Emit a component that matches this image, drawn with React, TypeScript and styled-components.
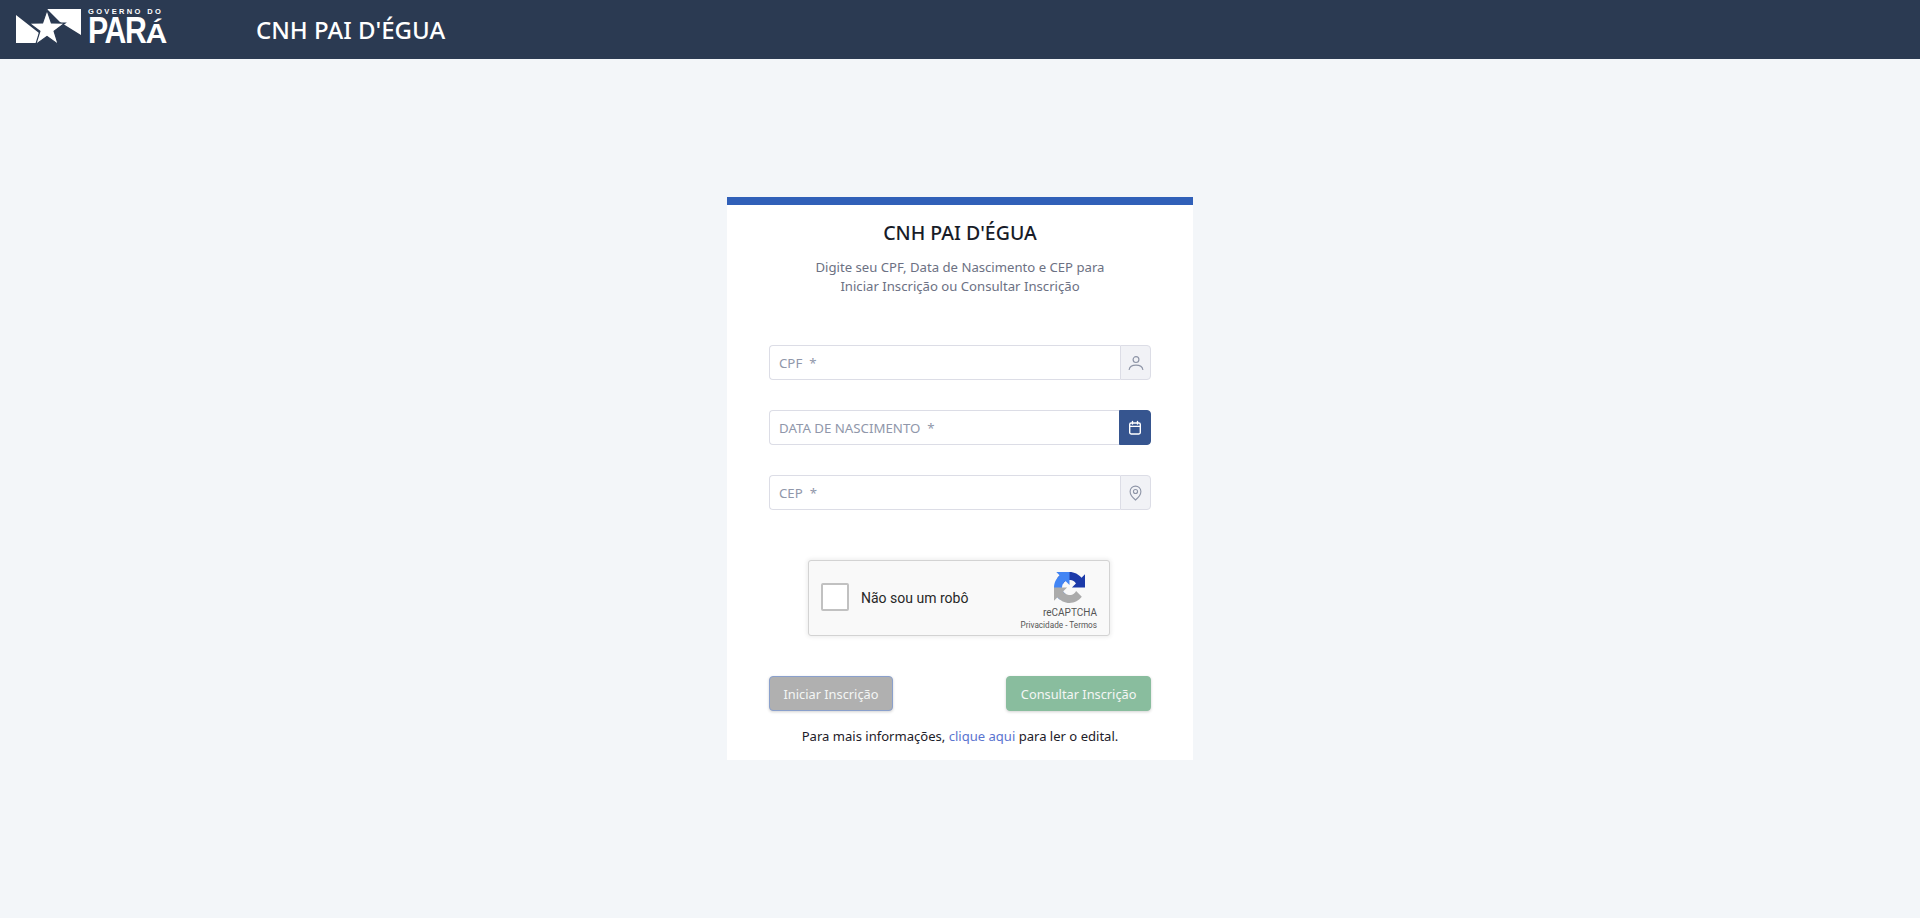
import { ReactNode } from "react";
import styled, { createGlobalStyle } from "styled-components";

const GlobalStyle = createGlobalStyle`
  html, body {
    margin: 0;
    padding: 0;
    height: 100%;
    background: #f3f6f9;
    font-family: "Noto Sans", "Open Sans", sans-serif;
  }
  * { box-sizing: border-box; }
`;

const Page = styled.div`
  min-height: 918px;
  display: flex;
  flex-direction: column;
`;

const Header = styled.header`
  height: 59px;
  background: #2b3a52;
  display: flex;
  align-items: center;
  padding-left: 16px;
`;

const LogoBox = styled.div`
  width: 240px;
  height: 59px;
  display: flex;
  align-items: flex-start;
  flex-shrink: 0;
`;

const LogoMark = styled.svg`
  width: 66px;
  height: 36px;
  margin-top: 9px;
  flex-shrink: 0;
`;

const LogoWords = styled.div`
  margin: 7px 0 0 6px;
  display: flex;
  flex-direction: column;
  color: #ffffff;
  font-family: "Liberation Sans", Arial, sans-serif;
`;

const LogoSmall = styled.span`
  font-size: 7.5px;
  line-height: 9px;
  font-weight: 700;
  letter-spacing: 2.35px;
  white-space: nowrap;
`;

const LogoBig = styled.span`
  font-size: 36px;
  line-height: 29px;
  font-weight: 700;
  letter-spacing: -1.6px;
  white-space: nowrap;
  transform: scaleX(0.84);
  transform-origin: left;
`;

const LogoAccented = styled.span`
  display: inline-block;
  transform: scaleY(0.79);
  transform-origin: 0 26.4px;
`;

const HeaderTitle = styled.h1`
  margin: 0;
  color: #ffffff;
  font-size: 24px;
  font-weight: 500;
  white-space: nowrap;
`;

const Main = styled.main`
  display: flex;
  justify-content: center;
  padding-top: 138px;
`;

const Card = styled.section`
  width: 466px;
  height: 563px;
  background: #ffffff;
  border-top: 8px solid #3060b8;
  padding: 0 42px;
  display: flex;
  flex-direction: column;
`;

const CardTitle = styled.h2`
  margin: 15px 0 0;
  font-size: 19.5px;
  line-height: 26px;
  font-weight: 500;
  color: #181c28;
  text-align: center;
`;

const Subtitle = styled.p`
  margin: 12px 0 0;
  font-size: 13.15px;
  line-height: 19px;
  color: #6c7183;
  text-align: center;
`;

const Fields = styled.div`
  margin-top: 49px;
  display: flex;
  flex-direction: column;
  gap: 30px;
`;

const FieldRow = styled.div`
  position: relative;
  display: flex;
  height: 35px;
`;

const FieldInput = styled.input`
  flex: 1;
  min-width: 0;
  height: 100%;
  border: 1px solid #dcdde6;
  border-right: none;
  border-radius: 4px 0 0 4px;
  background: #ffffff;
  outline: none;
`;

const FieldLabel = styled.label`
  position: absolute;
  left: 10px;
  top: 0;
  line-height: 36px;
  font-size: 13.25px;
  color: #9097aa;
  white-space: pre;
`;

const Addon = styled.span<{ $active?: boolean }>`
  width: ${(p) => (p.$active ? "32px" : "31px")};
  display: flex;
  align-items: center;
  justify-content: center;
  border-radius: 0 4px 4px 0;
  border: 1px solid ${(p) => (p.$active ? "#36558f" : "#dcdde6")};
  background: ${(p) => (p.$active ? "#36558f" : "#f1f2f6")};
  color: ${(p) => (p.$active ? "#ffffff" : "#8e95a7")};
`;

const Captcha = styled.div`
  align-self: center;
  margin: 50px 0 0 -2px;
  width: 302px;
  height: 76px;
  background: #f9f9f9;
  border: 1px solid #d3d3d3;
  border-radius: 3px;
  box-shadow: 0 0 4px 1px rgba(0, 0, 0, 0.08);
  display: flex;
  align-items: center;
  padding: 0 12px;
  font-family: Roboto, "Liberation Sans", sans-serif;
`;

const CaptchaBox = styled.span`
  width: 28px;
  height: 28px;
  margin-top: -2px;
  background: #ffffff;
  border: 2px solid #c1c1c1;
  border-radius: 2px;
  flex-shrink: 0;
`;

const CaptchaLabel = styled.span`
  margin-left: 12px;
  font-size: 14px;
  color: #282828;
  white-space: nowrap;
`;

const CaptchaBrand = styled.div`
  margin-left: auto;
  align-self: flex-start;
  padding-top: 11px;
  display: flex;
  flex-direction: column;
  align-items: flex-end;
  color: #555555;
`;

const CaptchaMark = styled.div`
  display: flex;
  flex-direction: column;
  align-items: center;
`;

const CaptchaLogo = styled.svg`
  width: 31px;
  height: 31px;
`;

const CaptchaName = styled.span`
  margin-top: 3px;
  font-size: 10px;
  line-height: 13px;
`;

const CaptchaLinks = styled.span`
  margin-top: 1px;
  font-size: 8.2px;
  line-height: 11px;
  white-space: nowrap;
`;

const Actions = styled.div`
  margin-top: 40px;
  display: flex;
  justify-content: space-between;
`;

const ActionButton = styled.button<{ $tone: "grey" | "green" }>`
  height: 35px;
  padding: 0 13.5px;
  border-radius: 4px;
  font-family: inherit;
  font-size: 12.8px;
  color: #f4f6f5;
  white-space: nowrap;
  background: ${(p) => (p.$tone === "grey" ? "#b0b0b0" : "#89bd9e")};
  border: 1px solid ${(p) => (p.$tone === "grey" ? "#8aa0cc" : "#89bd9e")};
  box-shadow: 0 1px 3px rgba(0, 0, 0, 0.18);
`;

const MoreInfo = styled.p`
  margin: 16px 0 0;
  font-size: 13.05px;
  line-height: 18px;
  color: #1d2029;
  text-align: center;
`;

const InfoLink = styled.a`
  color: #5a74d0;
  text-decoration: none;
`;

const UserIcon = () => (
  <svg width="16" height="16" viewBox="0 0 16 16" fill="none" stroke="currentColor" strokeWidth="1.2" strokeLinecap="round">
    <circle cx="8" cy="4.6" r="2.9" />
    <path d="M1.2 14.5c.4-2.9 2.8-4.3 6.8-4.3s6.4 1.4 6.8 4.3" />
  </svg>
);

const CalendarIcon = () => (
  <svg width="14" height="16" viewBox="0 0 14 16" fill="none" stroke="currentColor" strokeWidth="1.4" strokeLinecap="round">
    <rect x="1.7" y="3" width="10.6" height="11" rx="1.4" />
    <path d="M1.7 6.4h10.6M4.5 1.4v2.6M9.5 1.4v2.6" />
  </svg>
);

const PinIcon = () => (
  <svg width="13" height="16" viewBox="0 0 14 17" fill="none" stroke="currentColor" strokeWidth="1.2">
    <path d="M7 16C4 13.6 1.2 10.8 1.2 6.9a5.8 5.8 0 0 1 11.6 0C12.8 10.8 10 13.6 7 16Z" />
    <circle cx="7" cy="6.9" r="2.2" />
  </svg>
);

const arrowArm =
  "M64 32V4.7l-7.2 7.2C50.9 4.7 42 0 32 0 21.6 0 12.4 5 6.6 12.7l11.7 11.9a15.5 15.5 0 0 1 4.8-5.3c2-1.6 4.9-2.9 8.9-2.9.5 0 1 .1 1.5.3 5 .4 9.3 3.1 11.8 7.1L37 32Z";

const Field = ({ id, label, children, active }: { id: string; label: string; children: ReactNode; active?: boolean }) => (
  <FieldRow>
    <FieldInput id={id} />
    <FieldLabel htmlFor={id}>{label}</FieldLabel>
    <Addon $active={active}>{children}</Addon>
  </FieldRow>
);

const App = () => {
  return (
    <Page>
      <GlobalStyle />
      <Header>
        <LogoBox>
          <LogoMark viewBox="0 0 66 36">
            <path d="M0 6 23 24 21 34H0Z M31 0H65V26L44 13Z" fill="#ffffff" />
            <path
              d="M31 1 35.4 13.9 49.1 14.1 38.1 22.3 42.2 35.4 31 27.5 19.8 35.4 23.9 22.3 12.9 14.1 26.6 13.9Z"
              fill="#ffffff"
              stroke="#2b3a52"
              strokeWidth="1.2"
            />
          </LogoMark>
          <LogoWords>
            <LogoSmall>GOVERNO DO</LogoSmall>
            <LogoBig>
              PAR<LogoAccented>Á</LogoAccented>
            </LogoBig>
          </LogoWords>
        </LogoBox>
        <HeaderTitle>CNH PAI D'ÉGUA</HeaderTitle>
      </Header>
      <Main>
        <Card>
          <CardTitle>CNH PAI D'ÉGUA</CardTitle>
          <Subtitle>
            Digite seu CPF, Data de Nascimento e CEP para
            <br />
            Iniciar Inscrição ou Consultar Inscrição
          </Subtitle>
          <Fields>
            <Field id="cpf" label="CPF  *">
              <UserIcon />
            </Field>
            <Field id="nascimento" label="DATA DE NASCIMENTO  *" active>
              <CalendarIcon />
            </Field>
            <Field id="cep" label="CEP  *">
              <PinIcon />
            </Field>
          </Fields>
          <Captcha>
            <CaptchaBox />
            <CaptchaLabel>Não sou um robô</CaptchaLabel>
            <CaptchaBrand>
              <CaptchaMark>
                <CaptchaLogo viewBox="0 0 64 64">
                  <path d={arrowArm} fill="#1c3aa9" />
                  <path d={arrowArm} fill="#4285f4" transform="rotate(-90 32 32)" />
                  <path d={arrowArm} fill="#ababab" transform="rotate(180 32 32)" />
                </CaptchaLogo>
                <CaptchaName>reCAPTCHA</CaptchaName>
              </CaptchaMark>
              <CaptchaLinks>Privacidade - Termos</CaptchaLinks>
            </CaptchaBrand>
          </Captcha>
          <Actions>
            <ActionButton $tone="grey">Iniciar Inscrição</ActionButton>
            <ActionButton $tone="green">Consultar Inscrição</ActionButton>
          </Actions>
          <MoreInfo>
            Para mais informações, <InfoLink href="#edital">clique aqui</InfoLink> para ler o edital.
          </MoreInfo>
        </Card>
      </Main>
    </Page>
  );
};

export default App;
